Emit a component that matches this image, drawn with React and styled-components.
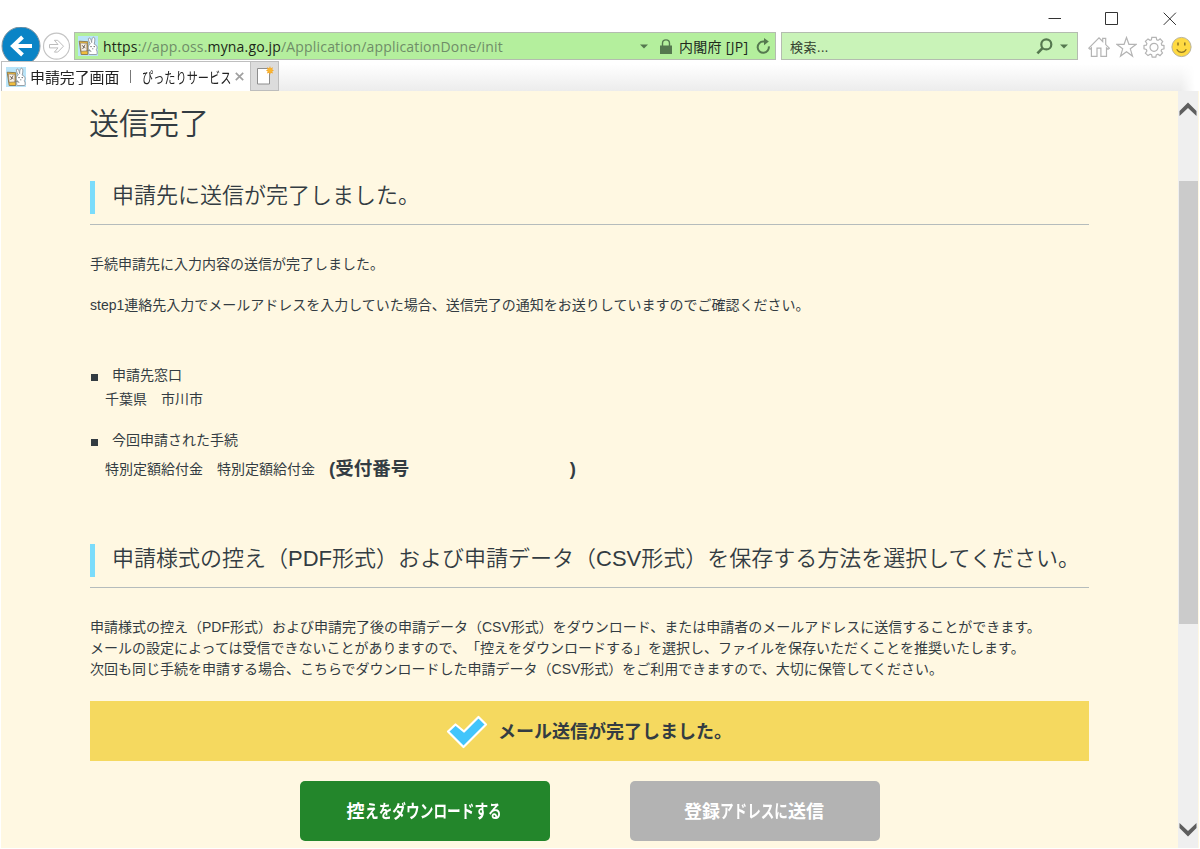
import React from 'react';
import styled, { createGlobalStyle } from 'styled-components';

const COLORS = {
  TEXT: '#333c42',
  PAGE: '#fff8e2',
  GREEN_BAR: '#b4ef9d',
  GREEN_SEARCH: '#c9f3b8',
  BAR_BORDER: '#b4bcb0',
  ICON: '#55784f',
  CHROME_ICON: '#b4b4b4',
};

const UI_FONT = "'Open Sans', 'Noto Sans CJK JP', sans-serif";
const PAGE_FONT = "'Liberation Sans', 'Noto Sans CJK JP', sans-serif";

const GlobalStyle = createGlobalStyle`
  * { box-sizing: border-box; }
  body { margin: 0; background: #fff; overflow: hidden; }
  h1, h2, p, ul { margin: 0; padding: 0; font-weight: normal; }
  svg { display: block; flex: none; }
`;

const Window = styled.div`
  width: 1200px;
  height: 849px;
  display: flex;
  flex-direction: column;
  padding: 0 1px 1px;
  background: #fff;
  font-family: ${UI_FONT};
  white-space: nowrap;
  text-spacing-trim: space-all;
`;

const TitleBar = styled.div`
  height: 27px;
  flex: none;
  display: flex;
  justify-content: flex-end;
  align-items: flex-end;
  gap: 43px;
  padding: 0 21px 1px 0;
`;

const NavBar = styled.div`
  height: 34px;
  flex: none;
  display: flex;
  align-items: flex-start;
`;

const AddressBar = styled.div`
  width: 702px;
  height: 28px;
  margin: 5px 5px 0 4px;
  padding: 0 4px 0 3px;
  display: flex;
  align-items: center;
  border: 1px solid ${COLORS.BAR_BORDER};
  background: ${COLORS.GREEN_BAR};
  font-size: 14px;
  color: #202a1d;
`;

const Url = styled.span`
  flex: 1;
  margin-left: 5px;
  color: #6f8d68;
  letter-spacing: 0.17px;
  b {
    font-weight: normal;
    color: #1c2719;
  }
`;

const Owner = styled.span`
  width: 72px;
  margin: 0 5px 0 7px;
  font-size: 14px;
  letter-spacing: 0.3px;
`;

const SearchBar = styled.div`
  width: 297px;
  height: 28px;
  margin-top: 5px;
  padding: 0 9px 0 8px;
  display: flex;
  align-items: center;
  border: 1px solid ${COLORS.BAR_BORDER};
  background: ${COLORS.GREEN_SEARCH};
  font-size: 13px;
  color: #33402f;
  span {
    flex: 1;
    letter-spacing: 0.5px;
  }
  svg + svg { margin-left: 7px; }
`;

const Tools = styled.div`
  display: flex;
  gap: 6px;
  margin: 9px 0 0 10px;
`;

const TabStrip = styled.div`
  height: 30px;
  flex: none;
  display: flex;
  background: linear-gradient(#fff 10%, #ececec);
  -webkit-mask-image: linear-gradient(90deg, #000 1180px, transparent 1194px);
  mask-image: linear-gradient(90deg, #000 1180px, transparent 1194px);
`;

const Tab = styled.div`
  width: 250px;
  display: flex;
  align-items: center;
  padding: 0 6px 0 4px;
  border: solid #bfbfbf;
  border-width: 1px 1px 0;
  background: #fff;
  font-size: 14.9px;
  color: #222;
`;

const TabTitle = styled.span`
  flex: 1;
  display: flex;
  align-items: center;
  margin-left: 4px;
  i {
    width: 1px;
    height: 13px;
    margin: 0 11px;
    background: #777;
  }
`;

const NewTab = styled.div`
  width: 28px;
  display: flex;
  align-items: flex-start;
  justify-content: center;
  padding-top: 4px;
  border: 1px solid #bdbdbd;
  border-left: 0;
  background: #dcdcdc;
`;

// kana drawn narrower than the kanji around it
const Kana = styled.span`
  display: inline-block;
  width: ${({ $width }) => $width}px;
  transform: scaleX(${({ $scale }) => $scale});
  transform-origin: left center;
`;

const Viewport = styled.div`
  height: 757px;
  flex: none;
  display: flex;
  background: ${COLORS.PAGE};
`;

const Page = styled.main`
  width: 1177px;
  padding: 14px 89px 0 89px;
  font-family: ${PAGE_FONT};
  font-size: 14px;
  line-height: 21px;
  color: ${COLORS.TEXT};
`;

const Title = styled.h1`
  height: 40px;
  margin: 0 0 36px -1px;
  font-size: 30px;
  line-height: 38px;
  font-weight: 350;
`;

const SectionTitle = styled.h2`
  width: 999px;
  height: 44px;
  padding-bottom: 10px;
  display: flex;
  border-bottom: 1px solid #b5bcbc;
  font-size: 22px;
  line-height: 29px;
  font-weight: 350;
  &::before {
    content: '';
    width: 5px;
    height: 33px;
    margin-right: 17px;
    background: #7bdcfb;
  }
`;

const Text = styled.p`
  height: 21px;
  margin-top: ${({ $top }) => $top || 0}px;
`;

const Item = styled.div`
  display: flex;
  align-items: center;
  height: 21px;
  margin-top: ${({ $top }) => $top}px;
  &::before {
    content: '';
    width: 7px;
    height: 7px;
    margin: 3px 14px 0 1px;
    background: ${COLORS.TEXT};
  }
`;

const ItemValue = styled.div`
  display: flex;
  align-items: center;
  height: 21px;
  margin: ${({ $top }) => $top}px 0 0 15px;
`;

const Receipt = styled.strong`
  width: 247px;
  margin: -2px 0 0 14px;
  display: flex;
  justify-content: space-between;
  font-size: 18.5px;
`;

const Notice = styled.div`
  width: 999px;
  height: 60px;
  margin-top: 21px;
  display: flex;
  align-items: center;
  padding: 2px 0 0 356px;
  gap: 10px;
  background: #f5d95f;
  font-size: 18px;
  font-weight: bold;
`;

const Actions = styled.div`
  display: flex;
  gap: 80px;
  margin: 20px 0 0 210px;
`;

const Button = styled.button`
  width: 250px;
  height: 60px;
  padding: 0 2px 2px 0;
  display: flex;
  justify-content: center;
  align-items: center;
  border: 0;
  border-radius: 5px;
  background: ${({ $disabled }) => ($disabled ? '#b3b3b3' : '#23862b')};
  color: #fff;
  font-family: ${PAGE_FONT};
  font-size: 18px;
  font-weight: bold;
`;

const ScrollBar = styled.div`
  width: 20px;
  display: flex;
  flex-direction: column;
  align-items: center;
  padding-top: 11px;
  background: #efefef;
`;

const Thumb = styled.div`
  width: 19px;
  height: 443px;
  margin: 65px 0 199px;
  background: #cbcbcb;
`;

const Favicon = () => (
  <svg width="20" height="20" viewBox="0 0 20 20">
    <rect width="20" height="20" fill="#b9e4f8" />
    <path d="M1.2 5.2l8.6.5v12.8H3.2z" fill="#f0bd3c" stroke="#7f6a43" strokeWidth=".8" />
    <path d="M2.3 7l6.6.3v7.6l-5.8.4z" fill="#f8f1e5" stroke="#776657" strokeWidth=".6" />
    <path d="M3.8 9.3l3.6 2.6M7.2 8.5L4.6 13" stroke="#685c55" strokeWidth=".9" />
    <path d="M12.3 8C10.4 5 9.8 2.2 11 1.9c1.2-.3 2.3 2 2.7 4.7C13.6 3.6 14.4.9 15.8 1.2c1.5.4 1.2 4.2.3 6.9 2.8.9 3.8 3.6 2.2 5.5 1.2 1.7 1 4.9.2 4.9h-7.3c-.9-1.3-.6-3 .4-4.2-2-1.7-1.7-5.1.7-6.3z" fill="#fff" stroke="#868b92" strokeWidth=".8" />
    <circle cx="13" cy="10.6" r=".7" fill="#444" />
    <circle cx="16.2" cy="10.6" r=".7" fill="#444" />
    <path d="M8.5 15l3.2-1 1.5 2M14 12.8h1.4" fill="none" stroke="#777" strokeWidth=".8" />
  </svg>
);

const BackForward = () => (
  <svg width="69" height="34" viewBox="1 27 69 34">
    <circle cx="21" cy="46" r="19" fill="#0a84c6" stroke="#87949c" strokeWidth="1" />
    <path d="M22.5 37L13 46l9.5 9M13.5 46H32" fill="none" stroke="#fff" strokeWidth="4" />
    <circle cx="56.5" cy="46.2" r="13" fill="#fff" stroke="#c4c4c4" strokeWidth="1.2" />
    <path d="M49.5 44.5h8.5l-3.6-4.2h3.3l5.8 5.9-5.8 5.9h-3.3l3.6-4.2h-8.5z" fill="#fff" stroke="#bcbcbc" />
  </svg>
);

const Caret = () => (
  <svg width="8" height="5" viewBox="0 0 8 5">
    <path d="M0 .5h8L4 4.6z" fill={COLORS.ICON} />
  </svg>
);

const Lock = styled.svg`
  margin-left: 12px;
`;

const Chevron = ({ down }) => (
  <svg width="18" height="14" viewBox="0 0 18 14">
    <path d={down ? 'M.5 0v5l8.5 8.5L17.5 5V0L9 8z' : 'M.5 14V9L9 .5 17.5 9v5L9 6z'} fill="#5e5e5e" />
  </svg>
);

const App = () => (
  <>
    <GlobalStyle />
    <Window>
      <TitleBar>
        <svg width="14" height="14" viewBox="0 0 14 14"><path d="M.5 6.5h12.5" stroke="#333" /></svg>
        <svg width="14" height="14" viewBox="0 0 14 14"><path d="M.5.5h12v12H.5z" fill="none" stroke="#333" /></svg>
        <svg width="16" height="14" viewBox="-1 0 16 14"><path d="M.7.7l12.2 12.2M12.9.7L.7 12.9" stroke="#333" /></svg>
      </TitleBar>
      <NavBar>
        <BackForward />
        <AddressBar>
          <Favicon />
          <Url><b>https</b>://app.oss.<b>myna.go.jp</b>/Application/applicationDone/init</Url>
          <Caret />
          <Lock width="12" height="15" viewBox="0 0 12 15">
            <path d="M0 6.5h12V15H0z" fill={COLORS.ICON} />
            <path d="M2.5 7V4.2c0-4.4 7-4.4 7 0V7" fill="none" stroke={COLORS.ICON} strokeWidth="1.4" />
          </Lock>
          <Owner>内閣府 [JP]</Owner>
          <svg width="15" height="17" viewBox="0 0 15 17">
            <path d="M9 3.6H7.2A5.6 5.6 0 1 0 12.8 8.4" fill="none" stroke={COLORS.ICON} strokeWidth="2" />
            <path d="M8 0l4.8 3.5L8 7.2z" fill={COLORS.ICON} />
          </svg>
        </AddressBar>
        <SearchBar>
          <span>検索...</span>
          <svg width="17" height="17" viewBox="0 0 17 17">
            <circle cx="10.3" cy="6.4" r="5" fill="none" stroke={COLORS.ICON} strokeWidth="2.2" />
            <path d="M6.8 9.8L1.4 15.4" stroke={COLORS.ICON} strokeWidth="2.6" />
          </svg>
          <Caret />
        </SearchBar>
        <Tools>
          <svg width="22" height="22" viewBox="0 0 22 22" fill="none" stroke={COLORS.CHROME_ICON} strokeWidth="1.2">
            <path d="M.8 12.2L11 1.8l3.7 3.7V2.3h3v6.3l3.6 3.6-1.3 1.1-1.5-1.3v8.4h-5.6v-8.2H9v8.2H3.4V12l-1.4 1.3z" />
          </svg>
          <svg width="21" height="22" viewBox="0 0 21 22" fill="none" stroke={COLORS.CHROME_ICON} strokeWidth="1.2">
            <path d="M10.5 1.5l2.4 6.8 7.1.1-5.7 4.4 2.2 7.3-6-4.4-6 4.4 2.2-7.3L1 8.4l7.1-.1z" />
          </svg>
          <svg width="22" height="22" viewBox="0 0 22 22" fill="none" stroke={COLORS.CHROME_ICON} strokeWidth="1.2">
            <path d="M8.8 1.4h4.4l.5 2.4 1.3.6 2.1-1.5 2.6 2.6-1.4 2.2.5 1.5 2.2.4v3.2l-2.3.6-.6 1.5 1.4 2.1-2.5 2.6-2.1-1.4-1.6.7-.5 2.2H9.2l-.6-2.3-1.4-.6-2.2 1.4-2.6-2.5L3.9 15l-.6-1.5-2.3-.6V9.5l2.3-.4.6-1.6-1.5-2.1L5 2.9l2 1.4 1.4-.5z" />
            <circle cx="11" cy="11.3" r="4" />
          </svg>
          <svg width="21" height="22" viewBox="0 0 21 22">
            <circle cx="10.5" cy="11" r="9.6" fill="#ffda42" stroke="#b9b39b" />
            <path d="M7 6.6v3M13.8 6.6v3" stroke="#8c7426" strokeWidth="1.5" />
            <path d="M5.7 13.2c2.4 4.3 7.3 4.3 9.6 0" fill="none" stroke="#8c7426" strokeWidth="1.2" />
          </svg>
        </Tools>
      </NavBar>
      <TabStrip>
        <Tab>
          <Favicon />
          <TabTitle>
            申請完了画面<i /><Kana $width={90} $scale={0.75}>ぴったりサービス</Kana>
          </TabTitle>
          <svg width="9" height="9" viewBox="0 0 9 9"><path d="M.8.8l7.4 7.4M8.2.8L.8 8.2" stroke="#a0a0a0" strokeWidth="1.7" /></svg>
        </Tab>
        <NewTab>
          <svg width="19" height="19" viewBox="0 0 19 19">
            <path d="M2.5 2.5h12v15.5h-12z" fill="#fff" stroke="#8d8d8d" />
            <path d="M15 0l.8 2.2L18 1.3l-.8 2.2 1.8.9-1.8.9.8 2.2-2.2-.8L15 9l-.9-2.3-2.2.8.8-2.2-1.8-.9 1.8-.9-.8-2.2 2.2.9z" fill="#f4a62a" />
            <circle cx="15" cy="4.4" r="2.4" fill="#f9b52f" />
          </svg>
        </NewTab>
      </TabStrip>
      <Viewport>
        <Page>
          <Title>送信完了</Title>
          <SectionTitle>申請先に送信が完了しました。</SectionTitle>
          <Text $top={29}>手続申請先に入力内容の送信が完了しました。</Text>
          <Text $top={20}>step1連絡先入力でメールアドレスを入力していた場合、送信完了の通知をお送りしていますのでご確認ください。</Text>
          <Item $top={49}>申請先窓口</Item>
          <ItemValue $top={3}>千葉県　市川市</ItemValue>
          <Item $top={20}>今回申請された手続</Item>
          <ItemValue $top={8}>
            特別定額給付金　特別定額給付金
            <Receipt><span>(受付番号</span><span>)</span></Receipt>
          </ItemValue>
          <Text $top={43} as="div" />
          <SectionTitle>申請様式の控え（PDF形式）および申請データ（CSV形式）を保存する方法を選択してください。</SectionTitle>
          <Text $top={29}>申請様式の控え（PDF形式）および申請完了後の申請データ（CSV形式）をダウンロード、または申請者のメールアドレスに送信することができます。</Text>
          <Text>メールの設定によっては受信できないことがありますので、「控えをダウンロードする」を選択し、ファイルを保存いただくことを推奨いたします。</Text>
          <Text>次回も同じ手続を申請する場合、こちらでダウンロードした申請データ（CSV形式）をご利用できますので、大切に保管してください。</Text>
          <Notice>
            <svg width="42" height="34" viewBox="0 0 42 34">
              <path d="M2 16.5l7.5-7 8.5 7L32.5 2l7.5 7.5L17.5 32z" fill="#42c5fb" stroke="#fff" strokeWidth="2.2" strokeLinejoin="round" />
            </svg>
            メール送信が完了しました。
          </Notice>
          <Actions>
            <Button>控<Kana $width={137} $scale={0.76}>えをダウンロードする</Kana></Button>
            <Button $disabled>登録<Kana $width={68} $scale={0.755}>アドレスに</Kana>送信</Button>
          </Actions>
        </Page>
        <ScrollBar>
          <Chevron />
          <Thumb />
          <Chevron down />
        </ScrollBar>
      </Viewport>
    </Window>
  </>
);

export default App;
